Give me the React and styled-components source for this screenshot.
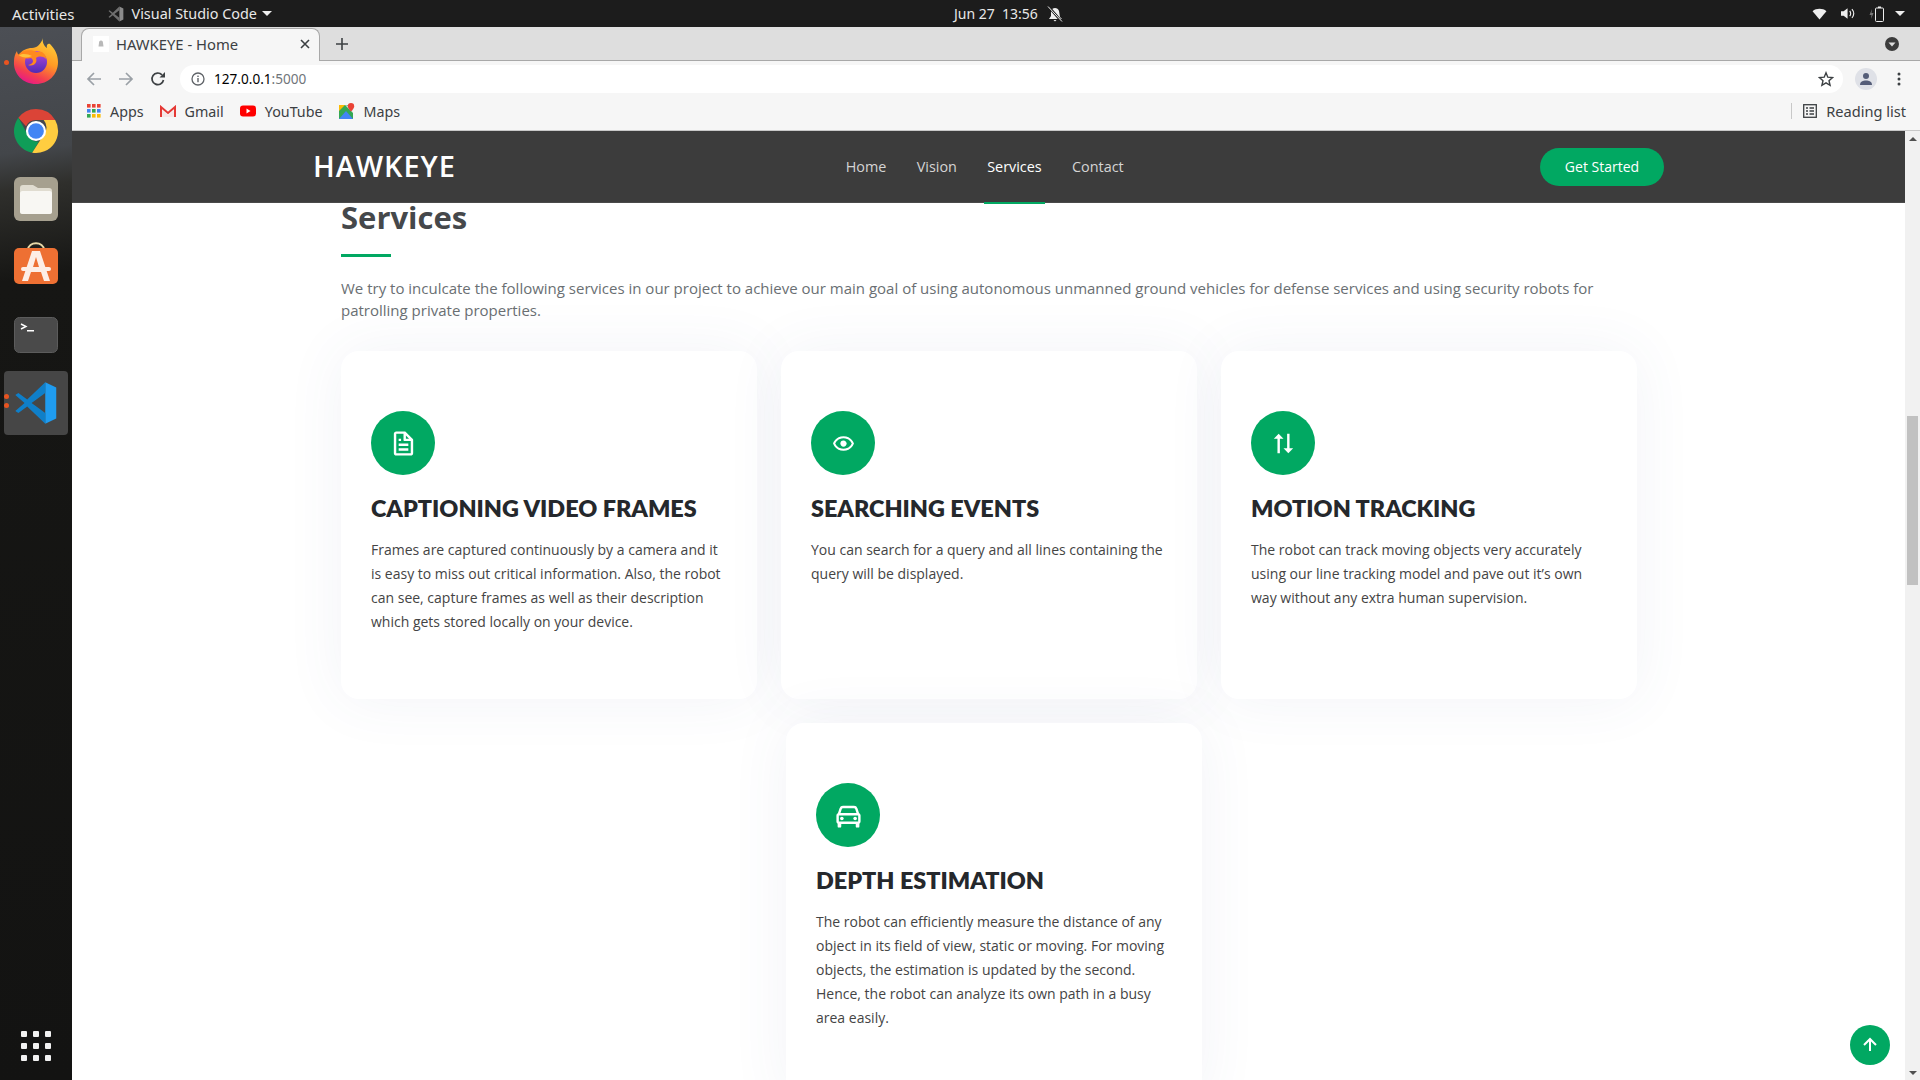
import React from 'react';
import styled, { createGlobalStyle } from 'styled-components';
import { BiFile, BiShow, BiSortAlt2, BiCar, BiUpArrowAlt } from 'react-icons/bi';

const GlobalStyle = createGlobalStyle`
  html, body {
    margin: 0;
    padding: 0;
    width: 1920px;
    height: 1080px;
    overflow: hidden;
    background: #fff;
  }
  * { box-sizing: border-box; }
`;

const uiFont = `"Noto Sans", "Open Sans", sans-serif`;
const green = '#01a862';

const Screen = styled.div`
  width: 1920px;
  height: 1080px;
  display: flex;
  flex-direction: column;
  font-family: "Open Sans", sans-serif;
`;

const TopBar = styled.div`
  height: 27px;
  background: #1c1c1c;
  color: #e8e8e8;
  font-family: ${uiFont};
  font-size: 14.4px;
  display: grid;
  grid-template-columns: 942px auto 1fr;
  align-items: center;
  padding: 0 15px 0 12px;
  flex: none;
`;

const TopLeft = styled.div`
  display: flex;
  align-items: center;
`;

const Activities = styled.span`
  font-size: 15px;
`;

const TopApp = styled.div`
  display: flex;
  align-items: center;
  gap: 8px;
  margin-left: 33px;
`;

const Clock = styled.div`
  display: flex;
  align-items: center;
  gap: 9px;
  font-size: 14px;
`;

const TopRight = styled.div`
  display: flex;
  align-items: center;
  justify-content: flex-end;
  gap: 14px;
`;

const Desk = styled.div`
  flex: 1;
  display: flex;
  min-height: 0;
`;

const Dock = styled.div`
  width: 72px;
  flex: none;
  display: flex;
  flex-direction: column;
  align-items: center;
  padding-top: 8px;
  gap: 12px;
  background:
    linear-gradient(172deg, #4c4f55 0, #43464a 12%, #2f2f2c 15.5%, #161614 24%, #131312 100%);
`;

const DockItem = styled.div`
  position: relative;
  width: 64px;
  flex: none;
  display: flex;
  align-items: center;
  justify-content: center;
  border-radius: 4px;
  background: ${(p) => (p.$active ? '#464646' : 'transparent')};
  height: ${(p) => (p.$active ? '64px' : '56px')};
  margin-top: ${(p) => (p.$active ? '-4px' : '0')};
  padding-bottom: ${(p) => p.$lift || 0}px;
`;

const Pip = styled.span`
  position: absolute;
  left: 0;
  top: ${(p) => p.$top}px;
  width: 5px;
  height: 5px;
  border-radius: 50%;
  background: #e95420;
`;

const ShowApps = styled.div`
  margin-top: auto;
  margin-bottom: 19px;
  display: grid;
  grid-template-columns: repeat(3, 6px);
  gap: 6px;
`;

const AppDot = styled.span`
  width: 6px;
  height: 6px;
  border-radius: 1px;
  background: #f1f1f1;
`;

const Browser = styled.div`
  flex: 1;
  min-width: 0;
  display: flex;
  flex-direction: column;
`;

const TabStrip = styled.div`
  height: 34px;
  flex: none;
  background: #dedede;
  border-bottom: 1px solid #a8a8a8;
  display: flex;
  align-items: flex-end;
  padding-left: 9px;
  padding-right: 21px;
  font-family: ${uiFont};
`;

const Tab = styled.div`
  width: 239px;
  height: 33px;
  margin-bottom: -1px;
  background: #f6f6f6;
  border: 1px solid #a8a8a8;
  border-bottom: none;
  border-radius: 8px 8px 0 0;
  display: flex;
  align-items: center;
  padding: 0 9px 3px 11px;
  font-size: 14.8px;
  color: #3c4043;
`;

const Favicon = styled.span`
  width: 16px;
  height: 16px;
  background: #fff;
  margin-right: 7px;
  display: flex;
  align-items: center;
  justify-content: center;
`;

const TabTitle = styled.span`
  flex: 1;
`;

const NewTab = styled.div`
  margin-left: 16px;
  height: 33px;
  display: flex;
  align-items: center;
`;

const StripEnd = styled.div`
  margin-left: auto;
  height: 33px;
  display: flex;
  align-items: center;
`;

const Toolbar = styled.div`
  height: 35px;
  flex: none;
  background: #f6f6f6;
  display: flex;
  align-items: center;
  padding: 0 19px 0 6px;
`;

const NavIcon = styled.span`
  width: 32px;
  display: flex;
  align-items: center;
  justify-content: center;
`;

const Omnibox = styled.div`
  flex: 1;
  height: 28px;
  margin: 0 12px 0 6px;
  background: #fff;
  border-radius: 14px;
  display: flex;
  align-items: center;
  padding: 0 9px 0 11px;
  font-family: ${uiFont};
  font-size: 13.6px;
  color: #000;
`;

const Host = styled.span`
  margin-left: 9px;
`;

const Port = styled.span`
  color: #70757a;
`;

const OmniEnd = styled.span`
  margin-left: auto;
  display: flex;
`;

const ProfileRow = styled.div`
  display: flex;
  align-items: center;
  gap: 20px;
`;

const Avatar = styled.span`
  width: 22px;
  height: 22px;
  border-radius: 50%;
  background: #dfe1e7;
  display: flex;
  align-items: center;
  justify-content: center;
`;

const Bookmarks = styled.div`
  height: 35px;
  flex: none;
  background: #f6f6f6;
  border-bottom: 1px solid #c8c8c8;
  display: flex;
  align-items: center;
  padding: 0 14px 4px 15px;
  font-family: ${uiFont};
  font-size: 14.3px;
  color: #3c4043;
`;

const Bookmark = styled.div`
  display: flex;
  align-items: center;
  gap: 9px;
  margin-right: 16px;
`;

const ReadingList = styled.div`
  margin-left: auto;
  display: flex;
  align-items: center;
  gap: 9px;
  border-left: 1px solid #c8c8c8;
  padding-left: 11px;
  height: 16px;
  font-size: 14.6px;
`;

const Viewport = styled.div`
  flex: 1;
  min-height: 0;
  display: flex;
  position: relative;
`;

const Page = styled.div`
  flex: 1;
  min-width: 0;
  overflow: hidden;
  background: #fff;
`;

const Header = styled.header`
  height: 72px;
  background: #3c3c3c;
  border-bottom: 1px solid #4a4a4a;
  display: flex;
  align-items: center;
  padding: 0 241px;
`;

const Logo = styled.div`
  font-family: "Open Sans", sans-serif;
  font-size: 29px;
  font-weight: 600;
  letter-spacing: 0.9px;
  color: #fff;
  padding-bottom: 2px;
`;

const Nav = styled.nav`
  display: flex;
  gap: 30.3px;
  margin-left: 390px;
  height: 100%;
  align-items: center;
`;

const NavLink = styled.a`
  position: relative;
  font-size: 14.4px;
  font-weight: 500;
  color: ${(p) => (p.$active ? '#fff' : '#d4d4d4')};

  &::after {
    content: '';
    display: ${(p) => (p.$active ? 'block' : 'none')};
    position: absolute;
    left: -3px;
    right: -3px;
    top: 45px;
    height: 2px;
    background: ${green};
  }
`;

const CtaButton = styled.a`
  margin-left: auto;
  width: 124px;
  height: 38px;
  border-radius: 19px;
  background: ${green};
  color: #fff;
  font-size: 14px;
  font-weight: 500;
  display: flex;
  align-items: center;
  justify-content: center;
`;

const Section = styled.section`
  width: 1298px;
  margin-left: 269px;
`;

const Title = styled.h2`
  margin: 0;
  font-family: "Open Sans", sans-serif;
  font-size: 31px;
  line-height: 30px;
  height: 30px;
  font-weight: 700;
  color: #45484b;
  position: relative;
  top: -1px;
`;

const TitleRule = styled.div`
  width: 50px;
  height: 3px;
  margin-top: 21px;
  background: ${green};
`;

const Lead = styled.p`
  margin: 20px 0 0;
  font-size: 15px;
  line-height: 22px;
  color: #6a6f73;
`;

const CardGrid = styled.div`
  display: grid;
  grid-template-columns: repeat(3, 416px);
  gap: 24px;
  margin-top: 30px;
`;

const CardWrap = styled.div`
  grid-column: 2;
  margin-left: 5px;
`;

const Card = styled.article`
  width: 416px;
  height: ${(p) => p.$height || 348}px;
  background: #fff;
  border-radius: 18px;
  padding: 60px 30px 0;
  box-shadow: 0 0 60px rgba(68, 88, 144, 0.07);
`;

const IconCircle = styled.div`
  width: 64px;
  height: 64px;
  border-radius: 50%;
  background: ${green};
  color: #fff;
  font-size: ${(p) => p.$size || 29}px;
  display: flex;
  align-items: center;
  justify-content: center;
`;

const CardTitle = styled.h3`
  margin: 17px 0 0;
  font-family: "Lato", sans-serif;
  font-size: 23.4px;
  line-height: 32px;
  font-weight: 800;
  color: #25282c;
`;

const CardText = styled.p`
  margin: 14px 0 0;
  font-size: 14px;
  line-height: 24px;
  color: #444;
`;

const Scrollbar = styled.div`
  width: 15px;
  flex: none;
  background: #f1f1f1;
  display: flex;
  flex-direction: column;
  align-items: center;
  position: relative;
`;

const Arrow = styled.span`
  width: 0;
  height: 0;
  border-left: 4px solid transparent;
  border-right: 4px solid transparent;
  ${(p) => (p.$down ? 'border-top: 4px solid #505050;' : 'border-bottom: 4px solid #505050;')}
  position: absolute;
  ${(p) => (p.$down ? 'bottom: 5px;' : 'top: 6px;')}
`;

const Thumb = styled.div`
  position: absolute;
  top: 285px;
  left: 2px;
  width: 11px;
  height: 169px;
  background: #c1c1c1;
`;

const BackToTop = styled.a`
  position: absolute;
  right: 30px;
  bottom: 15px;
  width: 40px;
  height: 40px;
  border-radius: 50%;
  background: ${green};
  color: #fff;
  font-size: 24px;
  display: flex;
  align-items: center;
  justify-content: center;
`;

const Caret = styled.span`
  display: inline-block;
  width: 0;
  height: 0;
  margin-left: -3px;
  border-left: 5px solid transparent;
  border-right: 5px solid transparent;
  border-top: 5px solid #eee;
`;

const CodeGlyph = ({ size = 32, mono }) => (
  <svg width={size} height={size} viewBox="0 0 100 100">
    <path d="M71 3 L96 15 V85 L71 97 Z" fill={mono ? '#8b8b8b' : '#1f9cf0'} />
    <path d="M71 3 L30 42 L10 27 L3 32 L24 50 L3 68 L10 73 L30 58 L71 97 V73 L40 50 L71 27 Z" fill={mono ? '#6f6f6f' : '#0f7fc9'} />
  </svg>
);

const FirefoxLogo = () => (
  <svg width="46" height="48" viewBox="0 0 46 48">
    <defs>
      <linearGradient id="ff" x1="0.75" y1="0" x2="0.3" y2="1">
        <stop offset="0" stopColor="#ffd13a" />
        <stop offset="0.45" stopColor="#ff9a24" />
        <stop offset="0.78" stopColor="#f4404e" />
        <stop offset="1" stopColor="#e5168c" />
      </linearGradient>
      <linearGradient id="ffc" x1="0.5" y1="0" x2="0.5" y2="1">
        <stop offset="0" stopColor="#b548d8" />
        <stop offset="1" stopColor="#4f2bb5" />
      </linearGradient>
    </defs>
    <path d="M30 1 C29 5 31 9 34 11 C33 8 35 6 37 7 C42 12 45 18 45 25 C45 38 35 47 23 47 C10 47 0 37 1 24 C1 20 2 17 4 14 C4 16 5 17 6 18 C9 13 14 11 19 11 C24 11 28 7 30 1 Z" fill="url(#ff)" />
    <circle cx="23" cy="25" r="11" fill="url(#ffc)" />
    <path d="M5 18 C9 13 18 12 24 15 C28 13 33 17 33 22 C30 19 26 19 23 21 C25 26 20 30 15 28 C21 27 21 23 18 21 C14 22 9 21 5 18 Z" fill="#ff8a1e" />
    <path d="M6 18.5 C10 16 15 17 19 19 C15 21 10 21 6 18.5 Z" fill="#ffc13a" />
  </svg>
);

const ChromeLogo = () => (
  <svg width="46" height="46" viewBox="0 0 48 48">
    <path d="M24 1 A23 23 0 0 1 44 12.5 L24 12.5 A11.5 11.5 0 0 0 13.6 19 L5.6 10.2 A23 23 0 0 1 24 1 Z" fill="#db4437" />
    <path d="M5.6 10.2 L15 27 A11.5 11.5 0 0 0 27 35 L20 46.6 A23 23 0 0 1 5.6 10.2 Z" fill="#0f9d58" />
    <path d="M44 12.5 A23 23 0 0 1 20 46.6 L32 28 A11.5 11.5 0 0 0 32 12.5 Z" fill="#ffcd40" />
    <circle cx="24" cy="24" r="10.5" fill="#fff" />
    <circle cx="24" cy="24" r="8.2" fill="#4285f4" />
  </svg>
);

const FilesLogo = () => (
  <svg width="46" height="46" viewBox="0 0 46 46">
    <rect x="1" y="1" width="44" height="44" rx="6" fill="#a6a08f" />
    <path d="M7 12 a3 3 0 0 1 3 -3 h10 l5 3 h11 a3 3 0 0 1 3 3 v20 a3 3 0 0 1 -3 3 H10 a3 3 0 0 1 -3 -3 Z" fill="#e0dcd0" />
    <rect x="7" y="15" width="32" height="23" rx="2.5" fill="#f8f7f3" />
  </svg>
);

const StoreLogo = () => (
  <svg width="46" height="50" viewBox="0 0 46 50">
    <path d="M15 8 C15 -1 31 -1 31 8" stroke="#e8d9a8" strokeWidth="2" fill="none" />
    <rect x="1" y="6" width="44" height="36" rx="5" fill="#ee7033" />
    <path d="M19 9 H27 L37 39 H31 L28 30 H18 L15 39 H9 Z M20 25 H26 L23 15 Z" fill="#fdeee6" />
    <rect x="8" y="25" width="30" height="4" rx="2" fill="#fdeee6" />
  </svg>
);

const TerminalLogo = () => (
  <svg width="44" height="36" viewBox="0 0 44 36">
    <rect x="0.5" y="0.5" width="43" height="35" rx="5" fill="#4a4a4a" stroke="#5c5c5c" />
    <path d="M7 7 L12 9.5 L7 12" stroke="#fff" strokeWidth="1.4" fill="none" />
    <rect x="13" y="13" width="7" height="1.5" fill="#fff" />
  </svg>
);

const Wifi = () => (
  <svg width="15" height="12" viewBox="0 0 16 13">
    <path d="M0.5 3.5 C4.5 0 11.5 0 15.5 3.5 L8 12.5 Z" fill="#eee" />
  </svg>
);

const Volume = () => (
  <svg width="14" height="13" viewBox="0 0 16 14">
    <path d="M0 4.5 H3 L7.5 1 V13 L3 9.5 H0 Z" fill="#eee" />
    <path d="M10 4 C11.4 6 11.4 8 10 10 M12.5 2 C15 5 15 9 12.5 12" stroke="#eee" strokeWidth="1.3" fill="none" />
  </svg>
);

const Battery = () => (
  <svg width="15" height="16" viewBox="0 0 15 16">
    <path d="M3 3 L0.5 9 H2.5 L2 13 L4.5 7 H2.5 Z" fill="#777" />
    <rect x="6.5" y="2" width="8" height="13.5" rx="1" fill="none" stroke="#eee" />
    <rect x="9" y="0.5" width="3" height="1.5" fill="#eee" />
  </svg>
);

const BellOff = () => (
  <svg width="16" height="16" viewBox="0 0 16 16">
    <path d="M4 5 C5 1 11 1 12 5 L13 11 L15 13 H2 L4 10 Z" fill="#eee" />
    <path d="M6.5 14 H9.5 L8 15.5 Z" fill="#eee" />
    <path d="M1.5 0.5 L14.5 15.5" stroke="#1c1c1c" strokeWidth="2.5" />
    <path d="M1 0.5 L15 15.5" stroke="#eee" strokeWidth="1" />
  </svg>
);

const BackArrow = ({ flip, color = '#9aa0a6' }) => (
  <svg width="16" height="16" viewBox="0 0 16 16" style={flip ? { transform: 'scaleX(-1)' } : undefined}>
    <path d="M15 8 H2 M8 2 L2 8 L8 14" stroke={color} strokeWidth="1.7" fill="none" />
  </svg>
);

const Reload = () => (
  <svg width="16" height="16" viewBox="0 0 16 16">
    <path d="M13.5 9 A5.8 5.8 0 1 1 12 3.8" stroke="#3c4043" strokeWidth="1.7" fill="none" />
    <path d="M9.5 6.5 H15 V1 Z" fill="#3c4043" />
  </svg>
);

const InfoIcon = () => (
  <svg width="14" height="14" viewBox="0 0 14 14">
    <circle cx="7" cy="7" r="6" fill="none" stroke="#5f6368" strokeWidth="1.3" />
    <rect x="6.3" y="6" width="1.4" height="4.2" fill="#5f6368" />
    <rect x="6.3" y="3.6" width="1.4" height="1.4" fill="#5f6368" />
  </svg>
);

const Star = () => (
  <svg width="16" height="16" viewBox="0 0 16 16">
    <path d="M8 1.8 L9.8 6.2 L14.6 6.6 L11 9.7 L12.1 14.4 L8 11.9 L3.9 14.4 L5 9.7 L1.4 6.6 L6.2 6.2 Z" fill="none" stroke="#3c4043" strokeWidth="1.4" />
  </svg>
);

const Person = () => (
  <svg width="14" height="14" viewBox="0 0 14 14">
    <circle cx="7" cy="4" r="3" fill="#555d78" />
    <path d="M1 13 C1 9.5 4 8.5 7 8.5 C10 8.5 13 9.5 13 13 Z" fill="#555d78" />
  </svg>
);

const Kebab = () => (
  <svg width="4" height="14" viewBox="0 0 4 14">
    <circle cx="2" cy="2" r="1.5" fill="#3c4043" />
    <circle cx="2" cy="7" r="1.5" fill="#3c4043" />
    <circle cx="2" cy="12" r="1.5" fill="#3c4043" />
  </svg>
);

const TabSearch = () => (
  <svg width="14" height="14" viewBox="0 0 14 14">
    <circle cx="7" cy="7" r="7" fill="#3c3c3c" />
    <path d="M3.5 5.5 H10.5 L7 9.5 Z" fill="#dedede" />
  </svg>
);

const CloseIcon = () => (
  <svg width="10" height="10" viewBox="0 0 10 10">
    <path d="M1 1 L9 9 M9 1 L1 9" stroke="#3c4043" strokeWidth="1.6" />
  </svg>
);

const PlusIcon = () => (
  <svg width="12" height="12" viewBox="0 0 12 12">
    <path d="M6 0 V12 M0 6 H12" stroke="#3c4043" strokeWidth="1.6" />
  </svg>
);

const SiteIcon = () => (
  <svg width="6" height="7" viewBox="0 0 6 7">
    <path d="M3 0.5 C1.5 0.5 1 1.5 1 3 L0.5 6.5 H5.5 L5 3 C5 1.5 4.5 0.5 3 0.5 Z" fill="#b9b9b9" />
  </svg>
);

const AppsIcon = () => {
  const colors = ['#ea4335', '#ea4335', '#ea4335', '#4285f4', '#34a853', '#4285f4', '#34a853', '#fbbc05', '#fbbc05'];
  return (
    <svg width="14" height="14" viewBox="0 0 14 14">
      {colors.map((c, i) => (
        <rect key={i} x={(i % 3) * 5} y={Math.floor(i / 3) * 5} width="3.6" height="3.6" fill={c} />
      ))}
    </svg>
  );
};

const GmailIcon = () => (
  <svg width="16" height="13" viewBox="0 0 16 13">
    <path d="M1 12 V2 L8 8 L15 2 V12" fill="none" stroke="#e53935" strokeWidth="2" />
    <path d="M2 12 V5.5 L8 10 L14 5.5 V12" fill="#f5e6e6" />
  </svg>
);

const YoutubeIcon = () => (
  <svg width="16" height="12" viewBox="0 0 16 12">
    <rect width="16" height="11" y="0.5" rx="3" fill="#f00" />
    <path d="M6.5 3.5 L10.5 6 L6.5 8.5 Z" fill="#fff" />
  </svg>
);

const MapsIcon = () => (
  <svg width="16" height="16" viewBox="0 0 16 16">
    <rect y="2" width="14" height="14" fill="#34a853" />
    <path d="M0 16 L7 8 L14 16 Z" fill="#4285f4" />
    <path d="M0 2 H6 L0 8 Z" fill="#fbbc05" />
    <path d="M6 2 L14 10 V4 Z" fill="#e8eaed" />
    <path d="M12 0 A3.2 3.2 0 0 1 15.2 3.2 C15.2 5.5 12 8.5 12 8.5 C12 8.5 8.8 5.5 8.8 3.2 A3.2 3.2 0 0 1 12 0 Z" fill="#ea4335" />
  </svg>
);

const ReadingIcon = () => (
  <svg width="14" height="14" viewBox="0 0 14 14">
    <rect x="0.7" y="0.7" width="12.6" height="12.6" fill="none" stroke="#3c4043" strokeWidth="1.3" />
    <path d="M3 4 H5 M6.5 4 H11 M3 7 H5 M6.5 7 H11 M3 10 H5 M6.5 10 H11" stroke="#3c4043" strokeWidth="1.3" />
  </svg>
);

const services = [
  {
    icon: <BiFile />,
    title: 'CAPTIONING VIDEO FRAMES',
    text: 'Frames are captured continuously by a camera and it is easy to miss out critical information. Also, the robot can see, capture frames as well as their description which gets stored locally on your device.',
  },
  {
    icon: <BiShow />,
    iconSize: 25,
    title: 'SEARCHING EVENTS',
    text: 'You can search for a query and all lines containing the query will be displayed.',
  },
  {
    icon: <BiSortAlt2 />,
    title: 'MOTION TRACKING',
    text: 'The robot can track moving objects very accurately using our line tracking model and pave out it\u2019s own way without any extra human supervision.',
  },
];

const depth = {
  icon: <BiCar />,
  title: 'DEPTH ESTIMATION',
  text: 'The robot can efficiently measure the distance of any object in its field of view, static or moving. For moving objects, the estimation is updated by the second. Hence, the robot can analyze its own path in a busy area easily.',
};

const ServiceCard = ({ item, height }) => (
  <Card $height={height}>
    <IconCircle $size={item.iconSize}>{item.icon}</IconCircle>
    <CardTitle>{item.title}</CardTitle>
    <CardText>{item.text}</CardText>
  </Card>
);

export default function App() {
  return (
    <Screen>
      <GlobalStyle />
      <TopBar>
        <TopLeft>
          <Activities>Activities</Activities>
          <TopApp>
            <CodeGlyph size={16} mono />
            <span>Visual Studio Code</span>
            <Caret />
          </TopApp>
        </TopLeft>
        <Clock>
          <span>Jun 27&nbsp;&nbsp;13:56</span>
          <BellOff />
        </Clock>
        <TopRight>
          <Wifi />
          <Volume />
          <Battery />
          <Caret />
        </TopRight>
      </TopBar>
      <Desk>
        <Dock>
          <DockItem $lift={4}>
            <Pip $top={25} />
            <FirefoxLogo />
          </DockItem>
          <DockItem>
            <ChromeLogo />
          </DockItem>
          <DockItem>
            <FilesLogo />
          </DockItem>
          <DockItem>
            <StoreLogo />
          </DockItem>
          <DockItem>
            <TerminalLogo />
          </DockItem>
          <DockItem $active>
            <Pip $top={23} />
            <Pip $top={32} />
            <CodeGlyph size={44} />
          </DockItem>
          <ShowApps>
            {Array.from({ length: 9 }).map((_, i) => (
              <AppDot key={i} />
            ))}
          </ShowApps>
        </Dock>
        <Browser>
          <TabStrip>
            <Tab>
              <Favicon>
                <SiteIcon />
              </Favicon>
              <TabTitle>HAWKEYE - Home</TabTitle>
              <CloseIcon />
            </Tab>
            <NewTab>
              <PlusIcon />
            </NewTab>
            <StripEnd>
              <TabSearch />
            </StripEnd>
          </TabStrip>
          <Toolbar>
            <NavIcon>
              <BackArrow />
            </NavIcon>
            <NavIcon>
              <BackArrow flip />
            </NavIcon>
            <NavIcon>
              <Reload />
            </NavIcon>
            <Omnibox>
              <InfoIcon />
              <Host>
                127.0.0.1<Port>:5000</Port>
              </Host>
              <OmniEnd>
                <Star />
              </OmniEnd>
            </Omnibox>
            <ProfileRow>
              <Avatar>
                <Person />
              </Avatar>
              <Kebab />
            </ProfileRow>
          </Toolbar>
          <Bookmarks>
            <Bookmark>
              <AppsIcon />
              <span>Apps</span>
            </Bookmark>
            <Bookmark>
              <GmailIcon />
              <span>Gmail</span>
            </Bookmark>
            <Bookmark>
              <YoutubeIcon />
              <span>YouTube</span>
            </Bookmark>
            <Bookmark>
              <MapsIcon />
              <span>Maps</span>
            </Bookmark>
            <ReadingList>
              <ReadingIcon />
              <span>Reading list</span>
            </ReadingList>
          </Bookmarks>
          <Viewport>
            <Page>
              <Header>
                <Logo>HAWKEYE</Logo>
                <Nav>
                  <NavLink>Home</NavLink>
                  <NavLink>Vision</NavLink>
                  <NavLink $active>Services</NavLink>
                  <NavLink>Contact</NavLink>
                </Nav>
                <CtaButton>Get Started</CtaButton>
              </Header>
              <Section>
                <Title>Services</Title>
                <TitleRule />
                <Lead>
                  We try to inculcate the following services in our project to achieve our main goal of using autonomous
                  unmanned ground vehicles for defense services and using security robots for patrolling private
                  properties.
                </Lead>
                <CardGrid>
                  {services.map((s) => (
                    <ServiceCard key={s.title} item={s} />
                  ))}
                  <CardWrap>
                    <ServiceCard item={depth} height={380} />
                  </CardWrap>
                </CardGrid>
              </Section>
            </Page>
            <Scrollbar>
              <Arrow />
              <Thumb />
              <Arrow $down />
            </Scrollbar>
            <BackToTop>
              <BiUpArrowAlt />
            </BackToTop>
          </Viewport>
        </Browser>
      </Desk>
    </Screen>
  );
}
